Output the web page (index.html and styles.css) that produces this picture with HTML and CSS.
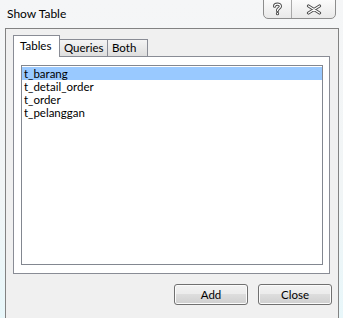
FILE: index.html
```html
<!DOCTYPE html>
<html lang="en">
<head>
    <meta charset="UTF-8">
    <title>Show Table</title>
    <link rel="stylesheet" href="styles.css">
</head>
<body>
<div class="window">
    <div class="titlebar">
        <span class="title">Show Table</span>
        <div class="caption">
            <div class="cap-btn help">
                <svg width="11" height="14" viewBox="0 0 11 14">
                    <path d="M2.6 4.2 C2.6 1.4 8.4 1.4 8.4 4.2 C8.4 6.3 5.5 6.4 5.5 8.6" fill="none" stroke="#4a4a4a" stroke-width="3.2" stroke-linecap="round"/>
                    <path d="M5.5 11.4 v0.3" fill="none" stroke="#4a4a4a" stroke-width="3.2" stroke-linecap="round"/>
                    <path d="M2.6 4.2 C2.6 1.4 8.4 1.4 8.4 4.2 C8.4 6.3 5.5 6.4 5.5 8.6" fill="none" stroke="#fff" stroke-width="1.3" stroke-linecap="round"/>
                    <path d="M5.5 11.4 v0.3" fill="none" stroke="#fff" stroke-width="1.3" stroke-linecap="round"/>
                </svg>
            </div>
            <div class="cap-btn close">
                <svg width="16" height="11" viewBox="0 0 16 11">
                    <path d="M2.5 2 L13.5 9 M13.5 2 L2.5 9" fill="none" stroke="#4a4a4a" stroke-width="3.2" stroke-linecap="round"/>
                    <path d="M2.5 2 L13.5 9 M13.5 2 L2.5 9" fill="none" stroke="#fff" stroke-width="1.3" stroke-linecap="round"/>
                </svg>
            </div>
        </div>
    </div>

    <div class="client">
        <div class="tabs">
            <div class="tab selected tab-tables">Tables</div>
            <div class="tab tab-queries">Queries</div>
            <div class="tab tab-both">Both</div>
        </div>
        <div class="panel">
            <ul class="listbox">
                <li class="active">t_barang</li>
                <li>t_detail_order</li>
                <li>t_order</li>
                <li>t_pelanggan</li>
            </ul>
        </div>
        <div class="actions">
            <button type="button">Add</button>
            <button type="button">Close</button>
        </div>
    </div>
</div>
</body>
</html>
```

FILE: styles.css
```css
body {
    margin: 0;
    width: 343px;
    height: 318px;
    overflow: hidden;
    font-family: Lato, "Liberation Sans", sans-serif;
    color: #000;
    background: linear-gradient(180deg, #f5f6f7 0%, #f1f5f6 60%, #e8f7fa 100%);
}

.window {
    padding: 0 4px 5px 5px;
}

.titlebar {
    display: flex;
    justify-content: space-between;
    align-items: flex-start;
    height: 28px;
}

.title {
    padding: 6px 0 0 2px;
    font-size: 12px;
    line-height: 15px;
    color: #000;
}

.caption {
    display: flex;
    margin: -1px 3px 0 0;
    height: 18px;
    border: 1px solid #8d8d8d;
    border-radius: 0 0 5px 5px;
    background: linear-gradient(180deg, #fbfbfb 0%, #f2f2f2 50%, #e9e9e9 100%);
    overflow: hidden;
}

.cap-btn {
    display: flex;
    justify-content: center;
    align-items: center;
}

.help {
    width: 27px;
    border-right: 1px solid #a9a9a9;
}

.close {
    width: 43px;
}

.client {
    height: 283px;
    border: 1px solid #828282;
    background: #f0f0f0;
    padding: 7px 6px 7px 7px;
}

.tabs {
    display: flex;
    align-items: flex-end;
    height: 20px;
    font-size: 11.5px;
    position: relative;
    z-index: 1;
}

.tab {
    border: 1px solid #898c95;
    border-bottom: none;
    height: 16px;
    line-height: 15px;
    padding-left: 4px;
    background: linear-gradient(180deg, #f4f4f4 0%, #e9e9e9 50%, #dedede 100%);
    margin-left: -1px;
}

.tab.selected {
    height: 21px;
    margin-bottom: -1px;
    line-height: 19px;
    background: #fff;
    margin-left: 0;
}

.tab-tables {
    width: 39px;
    padding-left: 6px;
}

.tab-queries {
    width: 43px;
}

.tab-both {
    width: 35px;
}

.panel {
    height: 200px;
    margin-right: 2px;
    border: 1px solid #898c95;
    background: #fff;
    padding: 8px 6px 8px 7px;
}

.listbox {
    height: 197px;
    margin: 0;
    padding: 1px 0 0 0;
    list-style: none;
    border: 1px solid #828790;
    font-size: 11.5px;
    line-height: 13px;
}

.listbox li {
    padding-left: 2px;
    height: 13px;
    white-space: nowrap;
}

.listbox li.active {
    background: #99c9ff;
}

.actions {
    display: flex;
    justify-content: flex-end;
    gap: 10px;
    margin-top: 10px;
}

button {
    width: 74px;
    height: 21px;
    padding: 0;
    border: 1px solid #707070;
    border-radius: 3px;
    box-shadow: inset 0 0 0 1px #fbfbfb;
    background: linear-gradient(180deg, #f2f2f2 0%, #ebebeb 50%, #dddddd 50%, #cfcfcf 100%);
    font-family: Lato, "Liberation Sans", sans-serif;
    font-size: 11.5px;
    color: #000;
}
```
